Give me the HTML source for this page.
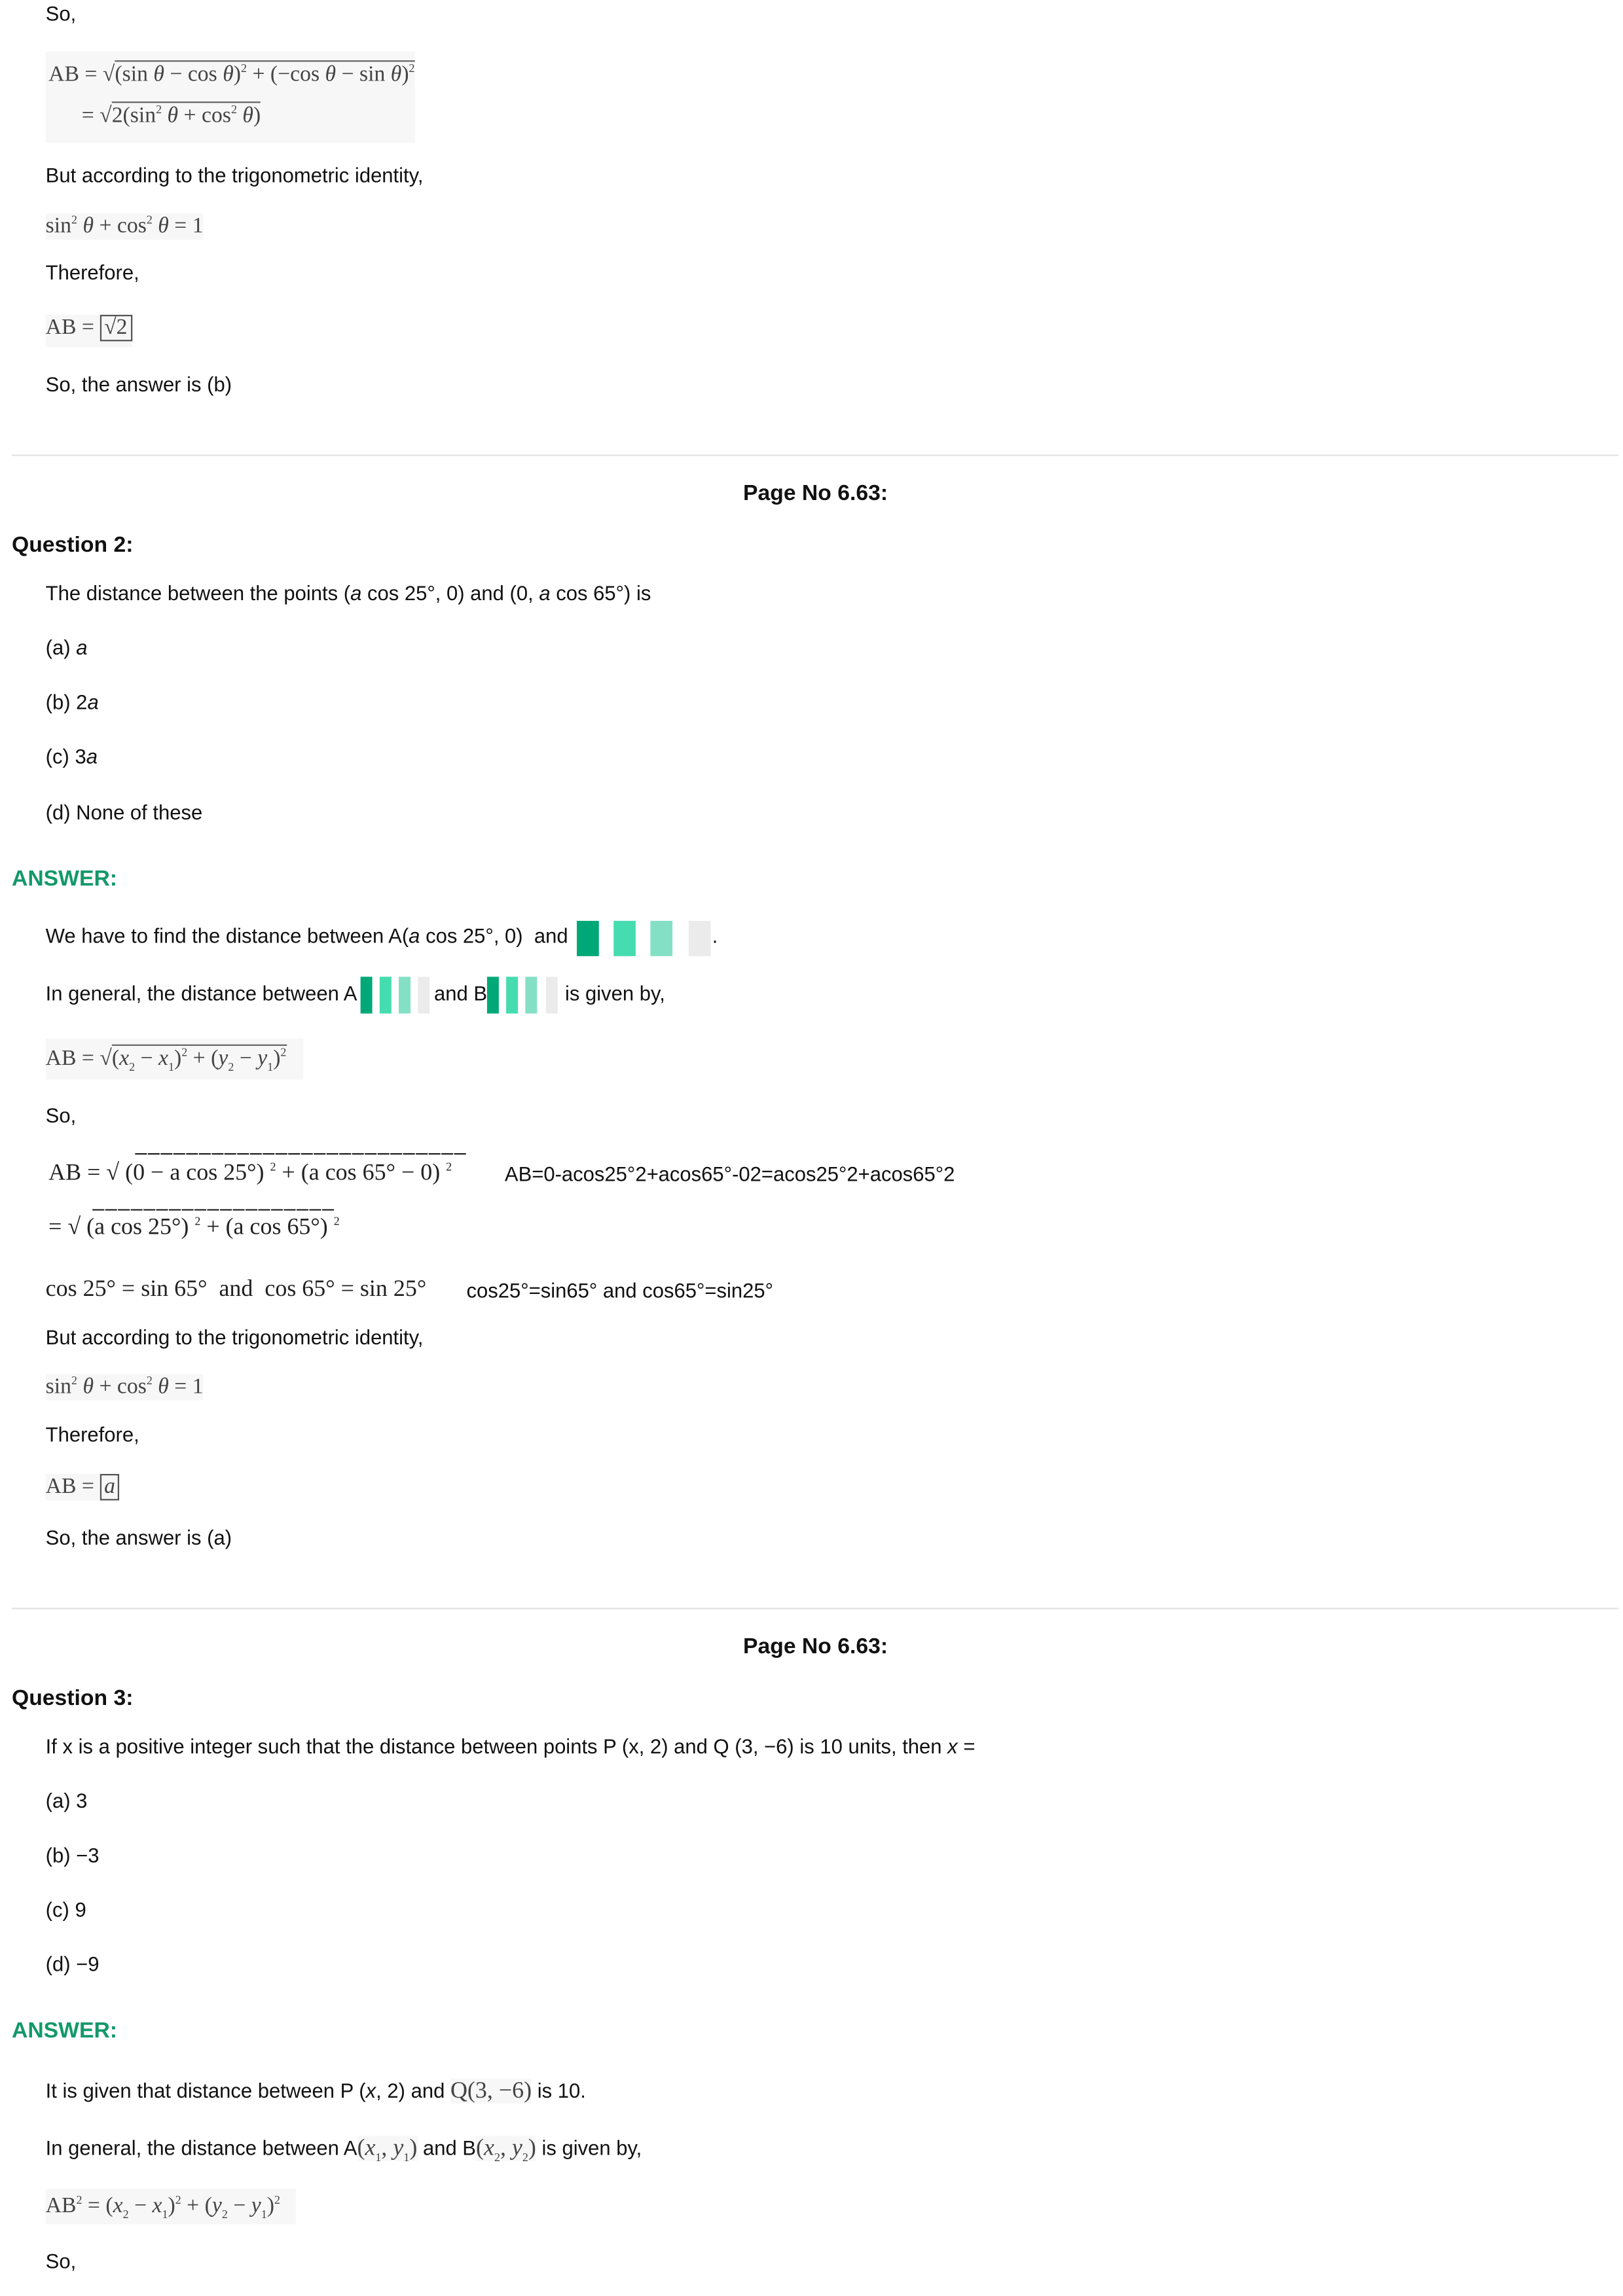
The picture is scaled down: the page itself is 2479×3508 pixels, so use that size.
<!DOCTYPE html>
<html><head><meta charset="utf-8"><style>
html,body{margin:0;padding:0;background:#fff;}
body{width:2479px;height:3508px;overflow:hidden;position:relative;}
#w{position:absolute;left:0;top:0;width:1103px;height:1561px;transform:scale(2.2475);transform-origin:0 0;font-family:"Liberation Sans",Arial,sans-serif;color:#111;}
.t{position:absolute;white-space:nowrap;font-size:13.8px;line-height:16px;}
.b{font-weight:bold;font-size:15px;}
.g{color:#12996a;}
.m{position:absolute;white-space:nowrap;font-family:"Liberation Serif",serif;color:#444;font-size:15px;line-height:18px;background:#f7f7f7;}
.ov{border-top:1px solid #666;padding-top:1px;}
.hr{position:absolute;left:8px;width:1092px;height:1px;background:#e3e3e3;}
.bar{position:absolute;}
sup,sub{font-size:8px;line-height:0;}
.s{font-family:"Liberation Serif",serif;font-size:16px;color:#222;}
.d{letter-spacing:1px;}
</style></head><body><div id="w">
<div class="t" style="left:31px;top:2px">So,</div>
<div class="m" style="left:31px;top:35px;width:251px;height:62px;line-height:28px;padding:2px 0 0 2px;box-sizing:border-box">AB = √<span class="ov">(sin <i>θ</i> − cos <i>θ</i>)<sup>2</sup> + (−cos <i>θ</i> − sin <i>θ</i>)<sup>2</sup></span><br>&nbsp;&nbsp;&nbsp;&nbsp;&nbsp;&nbsp;= √<span class="ov">2(sin<sup>2</sup> <i>θ</i> + cos<sup>2</sup> <i>θ</i>)</span></div>
<div class="t" style="left:31px;top:112px">But according to the trigonometric identity,</div>
<div class="m" style="left:31px;top:145px">sin<sup>2</sup> <i>θ</i> + cos<sup>2</sup> <i>θ</i> = 1</div>
<div class="t" style="left:31px;top:178px">Therefore,</div>
<div class="m" style="left:31px;top:214px;height:22px">AB = <span style="border:1px solid #555;padding:0 2px">√2</span></div>
<div class="t" style="left:31px;top:254px">So, the answer is (b)</div>
<div class="hr" style="top:309px"></div>
<div class="t b" style="left:505px;top:328px">Page No 6.63:</div>
<div class="t b" style="left:8px;top:363px">Question 2:</div>
<div class="t" style="left:31px;top:396px">The distance between the points (<i>a</i> cos 25°, 0) and (0, <i>a</i> cos 65°) is</div>
<div class="t" style="left:31px;top:433px">(a) <i>a</i></div>
<div class="t" style="left:31px;top:470px">(b) 2<i>a</i></div>
<div class="t" style="left:31px;top:507px">(c) 3<i>a</i></div>
<div class="t" style="left:31px;top:545px">(d) None of these</div>
<div class="t b g" style="left:8px;top:590px">ANSWER:</div>
<div class="t" style="left:31px;top:629px">We have to find the distance between A(<i>a</i> cos 25°, 0)&nbsp; and</div>
<div class="bar" style="left:392px;top:626px;width:15px;height:24px;background:#00a878"></div>
<div class="bar" style="left:417px;top:626px;width:15px;height:24px;background:#45dcb0"></div>
<div class="bar" style="left:442px;top:626px;width:15px;height:24px;background:#84e0c4"></div>
<div class="bar" style="left:468px;top:626px;width:15px;height:24px;background:#ebebeb"></div>
<div class="t" style="left:484px;top:629px">.</div>
<div class="t" style="left:31px;top:668px">In general, the distance between A</div>
<div class="bar" style="left:245px;top:664px;width:8px;height:25px;background:#00a878"></div>
<div class="bar" style="left:258px;top:664px;width:8px;height:25px;background:#45dcb0"></div>
<div class="bar" style="left:271px;top:664px;width:8px;height:25px;background:#84e0c4"></div>
<div class="bar" style="left:284px;top:664px;width:8px;height:25px;background:#ebebeb"></div>
<div class="t" style="left:295px;top:668px">and B</div>
<div class="bar" style="left:331px;top:664px;width:8px;height:25px;background:#00a878"></div>
<div class="bar" style="left:344px;top:664px;width:8px;height:25px;background:#45dcb0"></div>
<div class="bar" style="left:357px;top:664px;width:8px;height:25px;background:#84e0c4"></div>
<div class="bar" style="left:371px;top:664px;width:8px;height:25px;background:#ebebeb"></div>
<div class="t" style="left:384px;top:668px">is given by,</div>
<div class="m" style="left:31px;top:706px;height:28px;line-height:28px;width:175px">AB = √<span class="ov">(<i>x</i><sub>2</sub> − <i>x</i><sub>1</sub>)<sup>2</sup> + (<i>y</i><sub>2</sub> − <i>y</i><sub>1</sub>)<sup>2</sup></span></div>
<div class="t" style="left:31px;top:751px">So,</div>
<div class="t d" style="left:92px;top:770px">__________________________</div>
<div class="t s" style="left:33px;top:790px">AB = √ (0 − a cos 25°) <sup>2</sup> + (a cos 65° − 0) <sup>2</sup></div>
<div class="t" style="left:343px;top:791px">AB=0-acos25°2+acos65°-02=acos25°2+acos65°2</div>
<div class="t d" style="left:63px;top:808px">___________________</div>
<div class="t s" style="left:33px;top:827px">= √ (a cos 25°) <sup>2</sup> + (a cos 65°) <sup>2</sup></div>
<div class="t s" style="left:31px;top:869px">cos 25° = sin 65°&nbsp; and&nbsp; cos 65° = sin 25°</div>
<div class="t" style="left:317px;top:870px">cos25°=sin65° and cos65°=sin25°</div>
<div class="t" style="left:31px;top:902px">But according to the trigonometric identity,</div>
<div class="m" style="left:31px;top:934px">sin<sup>2</sup> <i>θ</i> + cos<sup>2</sup> <i>θ</i> = 1</div>
<div class="t" style="left:31px;top:968px">Therefore,</div>
<div class="m" style="left:31px;top:1002px">AB = <span style="border:1px solid #555;padding:0 2px"><i>a</i></span></div>
<div class="t" style="left:31px;top:1038px">So, the answer is (a)</div>
<div class="hr" style="top:1093px"></div>
<div class="t b" style="left:505px;top:1112px">Page No 6.63:</div>
<div class="t b" style="left:8px;top:1147px">Question 3:</div>
<div class="t" style="left:31px;top:1180px">If x is a positive integer such that the distance between points P (x, 2) and Q (3, −6) is 10 units, then <i>x</i> =</div>
<div class="t" style="left:31px;top:1217px">(a) 3</div>
<div class="t" style="left:31px;top:1254px">(b) −3</div>
<div class="t" style="left:31px;top:1291px">(c) 9</div>
<div class="t" style="left:31px;top:1328px">(d) −9</div>
<div class="t b g" style="left:8px;top:1373px">ANSWER:</div>
<div class="t" style="left:31px;top:1413px">It is given that distance between P (<i>x</i>, 2) and <span class="m" style="position:static;font-size:16px">Q(3, −6)</span> is 10.</div>
<div class="t" style="left:31px;top:1452px">In general, the distance between A<span class="m" style="position:static;font-size:16px">(<i>x</i><sub>1</sub>, <i>y</i><sub>1</sub>)</span> and B<span class="m" style="position:static;font-size:16px">(<i>x</i><sub>2</sub>, <i>y</i><sub>2</sub>)</span> is given by,</div>
<div class="m" style="left:31px;top:1488px;height:24px;line-height:24px;width:170px">AB<sup>2</sup> = (<i>x</i><sub>2</sub> − <i>x</i><sub>1</sub>)<sup>2</sup> + (<i>y</i><sub>2</sub> − <i>y</i><sub>1</sub>)<sup>2</sup></div>
<div class="t" style="left:31px;top:1530px">So,</div>
</div></body></html>
